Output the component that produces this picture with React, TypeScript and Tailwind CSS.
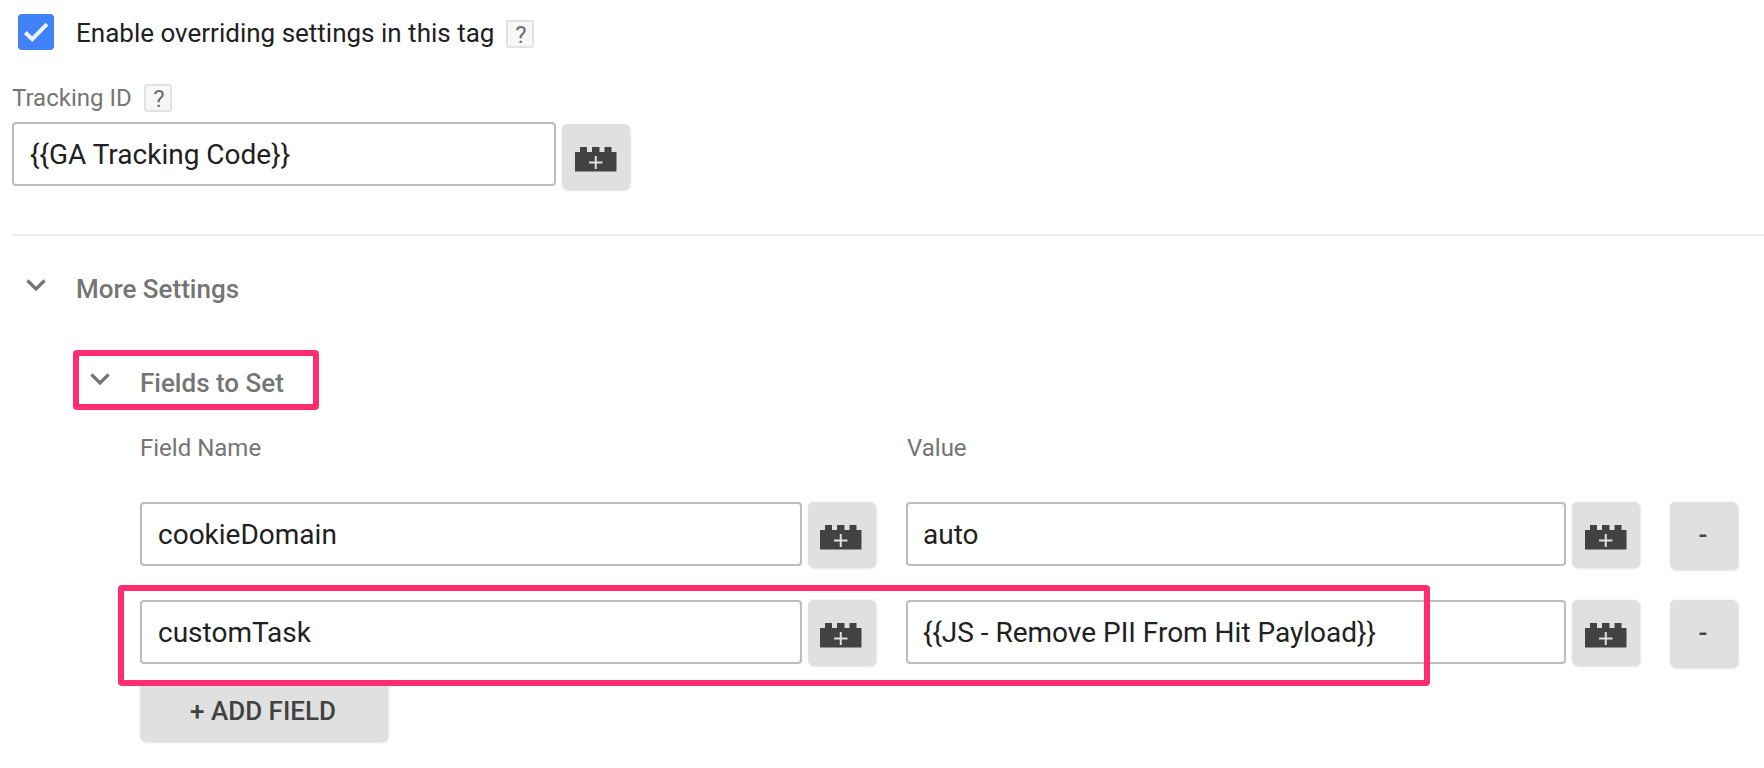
import React from "react";

const buttonShadow = "shadow-[1px_1px_3px_rgba(0,0,0,0.2)]";

function Help() {
  return (
    <span className="flex h-7 w-7 items-center justify-center rounded-[3px] border-2 border-[#e2e2e2] bg-[#f7f7f7] pt-0.5 pl-0.5 text-2xl leading-none text-[#6e6e6e]">
      ?
    </span>
  );
}

function Chevron() {
  return (
    <svg width="20" height="13" viewBox="0 0 20 13" fill="none" className="shrink-0">
      <path d="M1.5 1.5 L10 9.9 L18.5 1.5" stroke="#757575" strokeWidth="3.2" />
    </svg>
  );
}

function BrickButton({ inset = "pl-3" }: { inset?: string }) {
  return (
    <button
      type="button"
      aria-label="Insert variable"
      className={`flex h-[65px] w-[67px] shrink-0 rounded-[5px] bg-[#e0e0e0] pt-[23px] ${inset} ${buttonShadow}`}
    >
      <svg width="43" height="25" viewBox="0 0 43 25">
        <path
          d="M1 5H6V0H13V5H18V0H25.5V5H30.5V0H37.5V5H42.5V24.5H1Z"
          fill="#424242"
        />
        <path d="M15 15.5H28.5M21.75 9V22" stroke="#e0e0e0" strokeWidth="2" />
      </svg>
    </button>
  );
}

function Field({ value, layout }: { value: string; layout: string }) {
  return (
    <div
      className={`flex h-16 shrink-0 items-center rounded-[4px] border-2 border-[#bdbdbd] bg-white pt-0.5 text-[28px] whitespace-nowrap text-[#212121] ${layout}`}
    >
      {value}
    </div>
  );
}

function FieldRow({ name, value }: { name: string; value: string }) {
  return (
    <div className="flex h-[67px] items-start">
      <Field value={name} layout="w-[662px] pl-4" />
      <div className="ml-1.5 flex">
        <BrickButton inset="pl-[11px]" />
      </div>
      <div className="ml-[31px] flex gap-1.5">
        <Field value={value} layout="w-[660px] pl-[15px]" />
        <BrickButton />
      </div>
      <button
        type="button"
        className={`ml-[31px] h-[67px] w-[67px] rounded-[5px] bg-[#e0e0e0] pr-px text-[26px] font-medium text-[#424242] ${buttonShadow}`}
      >
        -
      </button>
    </div>
  );
}

export default function App() {
  return (
    <main className="relative h-[768px] w-[1764px] overflow-hidden bg-white pt-3.5 pl-3 font-['Roboto',sans-serif] text-[#757575]">
      <div className="flex h-9 items-center pl-1.5">
        <span className="flex h-9 w-9 items-center justify-center rounded-[4px] bg-[#4182f6]">
          <svg width="26" height="22" viewBox="0 0 26 22" fill="none">
            <path d="M2.3 11.5L9.2 18.2L24 3.2" stroke="#ecf3fe" strokeWidth="4" />
          </svg>
        </span>
        <span className="mt-0.5 ml-[22px] w-[430px] text-[26px] whitespace-nowrap text-[#212121]">
          Enable overriding settings in this tag
        </span>
        <span className="mt-1">
          <Help />
        </span>
      </div>

      <div className="mt-[34px] flex h-7 items-center">
        <span className="w-[132px] text-2xl whitespace-nowrap">Tracking ID</span>
        <Help />
      </div>
      <div className="mt-2.5 flex h-[67px] gap-1.5">
        <Field value="{{GA Tracking Code}}" layout="w-[544px] pl-4" />
        <div className="pt-0.5">
          <BrickButton />
        </div>
      </div>

      <div className="mt-[45px] h-0.5 bg-[#eeeeee]" />

      <div className="mt-[35px] flex h-9 items-center pl-3.5">
        <span className="-mt-2">
          <Chevron />
        </span>
        <h2 className="ml-[30px] text-[26px] font-medium">More Settings</h2>
      </div>

      <section className="pl-32">
        <div className="mt-[58px] -ml-16 flex h-9 items-center pl-3.5">
          <span className="-mt-2">
            <Chevron />
          </span>
          <h3 className="ml-[30px] text-[26px] font-medium">Fields to Set</h3>
        </div>

        <div className="mt-[29px] flex h-9 items-center text-2xl">
          <span className="w-[767px]">Field Name</span>
          <span>Value</span>
        </div>

        <div className="mt-[36px] flex flex-col gap-[31px]">
          <FieldRow name="cookieDomain" value="auto" />
          <FieldRow name="customTask" value="{{JS - Remove PII From Hit Payload}}" />
        </div>
        <button
          type="button"
          className={`mt-3.5 flex h-[60px] w-[247px] items-center justify-center rounded-[5px] bg-[#e0e0e0] pr-px text-[26px] font-medium text-[#424242] ${buttonShadow}`}
        >
          + ADD FIELD
        </button>
      </section>

      <div className="pointer-events-none absolute top-[350px] left-[73px] h-[60px] w-[246px] rounded-[4px] border-6 border-[#ff2d6f]" />
      <div className="pointer-events-none absolute top-[585px] left-[118px] h-[101px] w-[1312px] rounded-[4px] border-6 border-[#ff2d6f]" />
    </main>
  );
}
